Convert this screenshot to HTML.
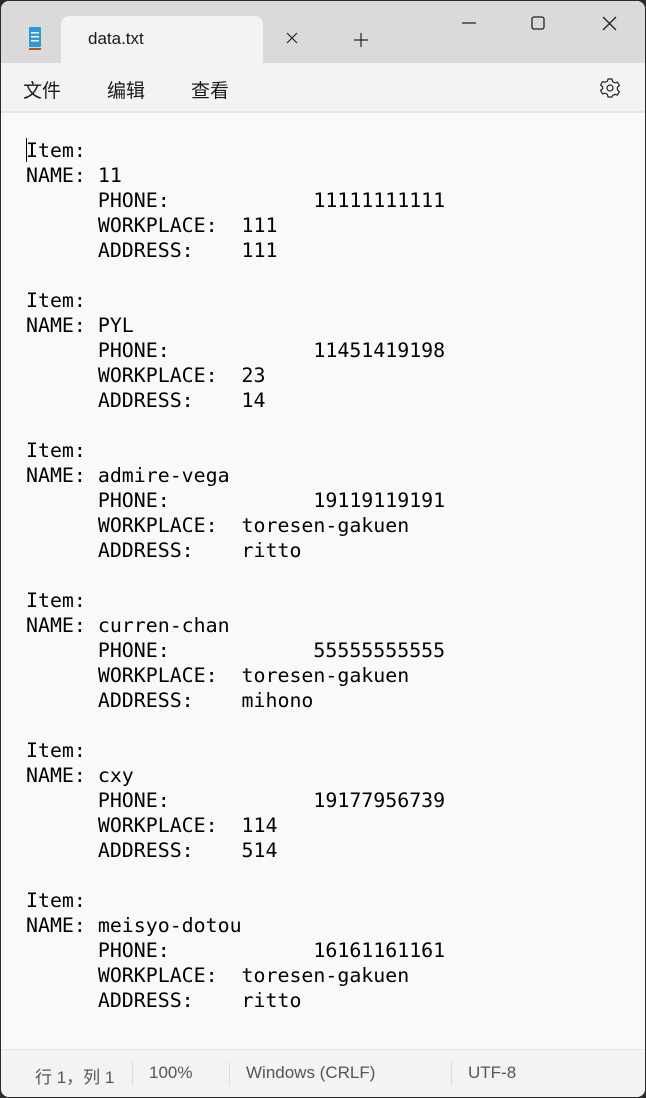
<!DOCTYPE html>
<html><head><style>
body{margin:0;width:646px;height:1098px;background:#2b2b2b;overflow:hidden;font-family:"Liberation Sans","Noto Sans CJK SC",sans-serif}
.win{position:absolute;left:1px;top:1px;width:644px;height:1096px;border-radius:8px;overflow:hidden;background:#f9f9f9}
.title{position:absolute;left:0;top:0;width:644px;height:62px;background:#dadada}
.tab{position:absolute;left:60px;top:15px;width:202px;height:47px;background:#f3f3f3;border-radius:8px 8px 0 0}
.menu{position:absolute;left:0;top:62px;width:644px;height:48px;background:#f3f3f3;border-bottom:2px solid #e5e5e5}
.menu span{position:absolute;top:13px;font-size:19px;color:#1a1a1a}
pre{position:absolute;left:25px;top:137px;margin:0;font-family:"DejaVu Sans Mono","Liberation Mono",monospace;font-size:19.9px;line-height:25px;color:#000}
.status{position:absolute;left:0;top:1048px;width:644px;height:50px;background:#f3f3f3;border-top:1px solid #e5e5e5;font-size:17px;color:#555}
.status span{position:absolute;top:13px}
.sep{position:absolute;top:12px;width:1px;height:24px;background:#ddd}
</style></head><body><div class="win">
<div class="title">
<div class="tab"></div>
<svg style="position:absolute;left:28px;top:24px" width="12" height="26"><rect x="0" y="2" width="12" height="20" rx="1" fill="#2a9bd6"/><rect x="2" y="7" width="8" height="1.5" fill="#fff"/><rect x="2" y="11" width="8" height="1.5" fill="#fff"/><rect x="2" y="15" width="8" height="1.5" fill="#fff"/><rect x="0" y="23" width="12" height="2" fill="#b5561a"/></svg>
<div style="position:absolute;left:87px;top:28px;font-size:17px;color:#1a1a1a">data.txt</div>
<svg style="position:absolute;left:285px;top:31px" width="12" height="12"><path d="M1 1L11 11M11 1L1 11" stroke="#222" stroke-width="1.2"/></svg>
<svg style="position:absolute;left:353px;top:32px" width="14" height="14"><path d="M7 0V14M0 7H14" stroke="#222" stroke-width="1.2"/></svg>
<svg style="position:absolute;left:373px;top:22px;display:none" width="12" height="2"></svg>
<svg style="position:absolute;left:461px;top:21px" width="14" height="2"><path d="M0 1H14" stroke="#222" stroke-width="1.2"/></svg>
<svg style="position:absolute;left:530px;top:15px" width="14" height="14"><rect x="1" y="1" width="12" height="12" rx="2" fill="none" stroke="#222" stroke-width="1.3"/></svg>
<svg style="position:absolute;left:601px;top:15px" width="15" height="15"><path d="M1 1L14 14M14 1L1 14" stroke="#222" stroke-width="1.3"/></svg>
</div>
<div class="menu"><span style="left:22px">文件</span><span style="left:106px">编辑</span><span style="left:190px">查看</span>
<svg style="position:absolute;left:598px;top:14px" width="22" height="22" viewBox="0 0 22 22"><path d="M9 2h4l.6 2.6 2.3 1.3 2.5-.8 2 3.4-2 1.8v2.6l2 1.8-2 3.4-2.5-.8-2.3 1.3L13 20H9l-.6-2.6-2.3-1.3-2.5.8-2-3.4 2-1.8V9.8l-2-1.8 2-3.4 2.5.8 2.3-1.3z" fill="none" stroke="#222" stroke-width="1.2"/><circle cx="11" cy="11" r="3" fill="none" stroke="#222" stroke-width="1.2"/></svg>
</div>
<div style="position:absolute;left:25px;top:137px;width:1px;height:24px;background:#000"></div>
<pre>Item:
NAME: 11
      PHONE:            11111111111
      WORKPLACE:  111
      ADDRESS:    111

Item:
NAME: PYL
      PHONE:            11451419198
      WORKPLACE:  23
      ADDRESS:    14

Item:
NAME: admire-vega
      PHONE:            19119119191
      WORKPLACE:  toresen-gakuen
      ADDRESS:    ritto

Item:
NAME: curren-chan
      PHONE:            55555555555
      WORKPLACE:  toresen-gakuen
      ADDRESS:    mihono

Item:
NAME: cxy
      PHONE:            19177956739
      WORKPLACE:  114
      ADDRESS:    514

Item:
NAME: meisyo-dotou
      PHONE:            16161161161
      WORKPLACE:  toresen-gakuen
      ADDRESS:    ritto</pre>
<div class="status">
<span style="left:34px">行 1，列 1</span><div class="sep" style="left:131px"></div>
<span style="left:148px">100%</span><div class="sep" style="left:228px"></div>
<span style="left:245px">Windows (CRLF)</span><div class="sep" style="left:450px"></div>
<span style="left:467px">UTF-8</span>
</div>
</div></body></html>
